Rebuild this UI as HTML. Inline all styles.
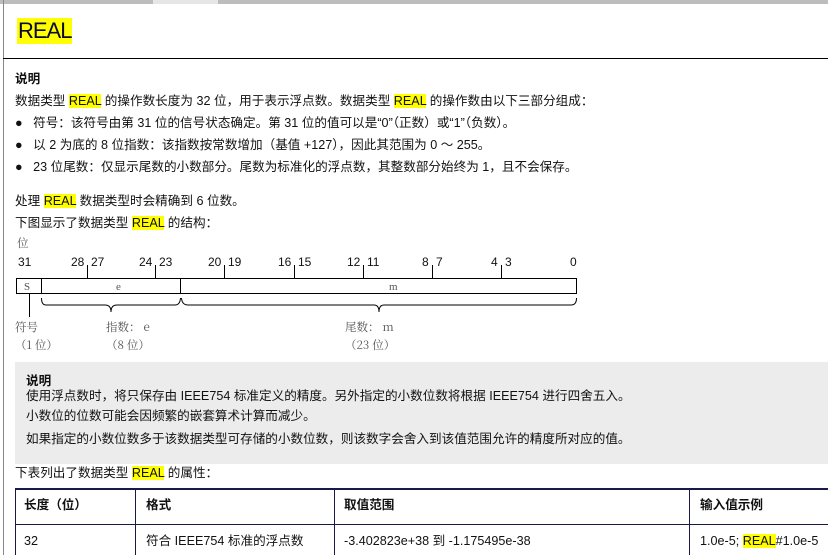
<!DOCTYPE html>
<html><head><meta charset="utf-8"><style>
*{margin:0;padding:0;box-sizing:border-box}
body{width:828px;height:555px;overflow:hidden;background:#fff;position:relative;font-family:"Liberation Sans","Noto Sans CJK SC",sans-serif;font-size:12.6px;color:#111}
.a{position:absolute;white-space:nowrap;line-height:14px}
.h{background:#ffff00}
.b{font-weight:bold}
.s{font-family:"Noto Serif CJK SC","Liberation Serif",serif;font-size:11.5px;color:#555}
</style></head><body>
<div style="position:absolute;left:0;top:0;width:828px;height:4px;background:#bdbdbd"></div>
<div style="position:absolute;left:153px;top:0;width:65px;height:4px;background:#e6e6e6"></div>
<div style="position:absolute;left:3px;top:0;width:1px;height:555px;background:#888"></div>
<div style="position:absolute;left:3px;top:58px;width:825px;height:1px;background:#000"></div>
<div class="a" style="left:17px;top:18px;font-size:22px;line-height:26px;background:#ffff00;color:#0a0a30;padding:0 1px;letter-spacing:-1px">REAL</div>

<div class="a b" style="left:15px;top:72px">说明</div>
<div class="a" style="left:15px;top:94px">数据类型 <span class="h">REAL</span> 的操作数长度为 32 位，用于表示浮点数。数据类型 <span class="h">REAL</span> 的操作数由以下三部分组成：</div>
<div class="a" style="left:15px;top:116px">●&nbsp;&nbsp;&nbsp;符号：该符号由第 31 位的信号状态确定。第 31 位的值可以是“0”（正数）或“1”（负数）。</div>
<div class="a" style="left:15px;top:138px">●&nbsp;&nbsp;&nbsp;以 2 为底的 8 位指数：该指数按常数增加（基值 +127），因此其范围为 0 ～ 255。</div>
<div class="a" style="left:15px;top:160px">●&nbsp;&nbsp;&nbsp;23 位尾数：仅显示尾数的小数部分。尾数为标准化的浮点数，其整数部分始终为 1，且不会保存。</div>
<div class="a" style="left:15px;top:194px">处理 <span class="h">REAL</span> 数据类型时会精确到 6 位数。</div>
<div class="a" style="left:15px;top:216px">下图显示了数据类型 <span class="h">REAL</span> 的结构：</div>
<div class="a s" style="left:17px;top:236px">位</div>

<svg style="position:absolute;left:0;top:250px" width="600" height="110" font-family="Liberation Sans,sans-serif" font-size="12" fill="#111">
<g stroke="#000" stroke-width="1" fill="none">
<rect x="16.5" y="28.5" width="560" height="15"/>
<line x1="41.5" y1="28" x2="41.5" y2="44"/>
<line x1="180.5" y1="28" x2="180.5" y2="44"/>
<line x1="87.5" y1="15" x2="87.5" y2="28"/>
<line x1="155.5" y1="15" x2="155.5" y2="28"/>
<line x1="224.5" y1="15" x2="224.5" y2="28"/>
<line x1="294.5" y1="15" x2="294.5" y2="28"/>
<line x1="363.5" y1="15" x2="363.5" y2="28"/>
<line x1="432.5" y1="15" x2="432.5" y2="28"/>
<line x1="501.5" y1="15" x2="501.5" y2="28"/>
<line x1="29.5" y1="44" x2="29.5" y2="67"/>
<path d="M41.5 48 Q41.5 55 46 55 L105 55 Q111 55 111 62 Q111 55 117 55 L175 55 Q180 55 180.5 48"/>
<path d="M181.5 48 Q182 55 188 55 L374 55 Q379 55 379 62 Q379 55 384 55 L571 55 Q576.5 55 576.5 48"/>
</g>
<text x="18" y="16">31</text>
<text x="71" y="16">28</text><text x="91" y="16">27</text>
<text x="139" y="16">24</text><text x="159" y="16">23</text>
<text x="208" y="16">20</text><text x="228" y="16">19</text>
<text x="278" y="16">16</text><text x="298" y="16">15</text>
<text x="347" y="16">12</text><text x="367" y="16">11</text>
<text x="422" y="16">8</text><text x="436" y="16">7</text>
<text x="491" y="16">4</text><text x="505" y="16">3</text>
<text x="570" y="16">0</text>
<g fill="#555" font-family="Liberation Serif,serif" font-size="11">
<text x="24" y="40">S</text><text x="116" y="40">e</text><text x="389" y="40">m</text>
</g>
</svg>
<div class="a s" style="left:15px;top:320px">符号</div>
<div class="a s" style="left:106px;top:320px">指数： e</div>
<div class="a s" style="left:345px;top:320px">尾数： m</div>
<div class="a s" style="left:15px;top:338px">（1 位）</div>
<div class="a s" style="left:106px;top:338px">（8 位）</div>
<div class="a s" style="left:345px;top:338px">（23 位）</div>

<div style="position:absolute;left:15px;top:362px;width:813px;height:102px;background:#ececec"></div>
<div class="a b" style="left:26px;top:374px">说明</div>
<div class="a" style="left:26px;top:389px">使用浮点数时，将只保存由 IEEE754 标准定义的精度。另外指定的小数位数将根据 IEEE754 进行四舍五入。</div>
<div class="a" style="left:26px;top:409px">小数位的位数可能会因频繁的嵌套算术计算而减少。</div>
<div class="a" style="left:26px;top:432px">如果指定的小数位数多于该数据类型可存储的小数位数，则该数字会舍入到该值范围允许的精度所对应的值。</div>
<div class="a" style="left:15px;top:466px">下表列出了数据类型 <span class="h">REAL</span> 的属性：</div>

<div style="position:absolute;left:15px;top:488px;width:813px;height:2px;background:#1a1a4a"></div>
<div style="position:absolute;left:15px;top:524px;width:813px;height:1px;background:#1a1a4a"></div>
<div style="position:absolute;left:15px;top:488px;width:1px;height:67px;background:#1a1a4a"></div>
<div style="position:absolute;left:135px;top:488px;width:1px;height:67px;background:#1a1a4a"></div>
<div style="position:absolute;left:334px;top:488px;width:1px;height:67px;background:#1a1a4a"></div>
<div style="position:absolute;left:689px;top:488px;width:1px;height:67px;background:#1a1a4a"></div>
<div class="a b" style="left:24px;top:498px">长度（位）</div>
<div class="a b" style="left:146px;top:498px">格式</div>
<div class="a b" style="left:344px;top:498px">取值范围</div>
<div class="a b" style="left:700px;top:498px">输入值示例</div>
<div class="a" style="left:24px;top:534px">32</div>
<div class="a" style="left:146px;top:534px">符合 IEEE754 标准的浮点数</div>
<div class="a" style="left:344px;top:534px">-3.402823e+38 到 -1.175495e-38</div>
<div class="a" style="left:700px;top:534px">1.0e-5; <span class="h">REAL</span>#1.0e-5</div>
</body></html>
